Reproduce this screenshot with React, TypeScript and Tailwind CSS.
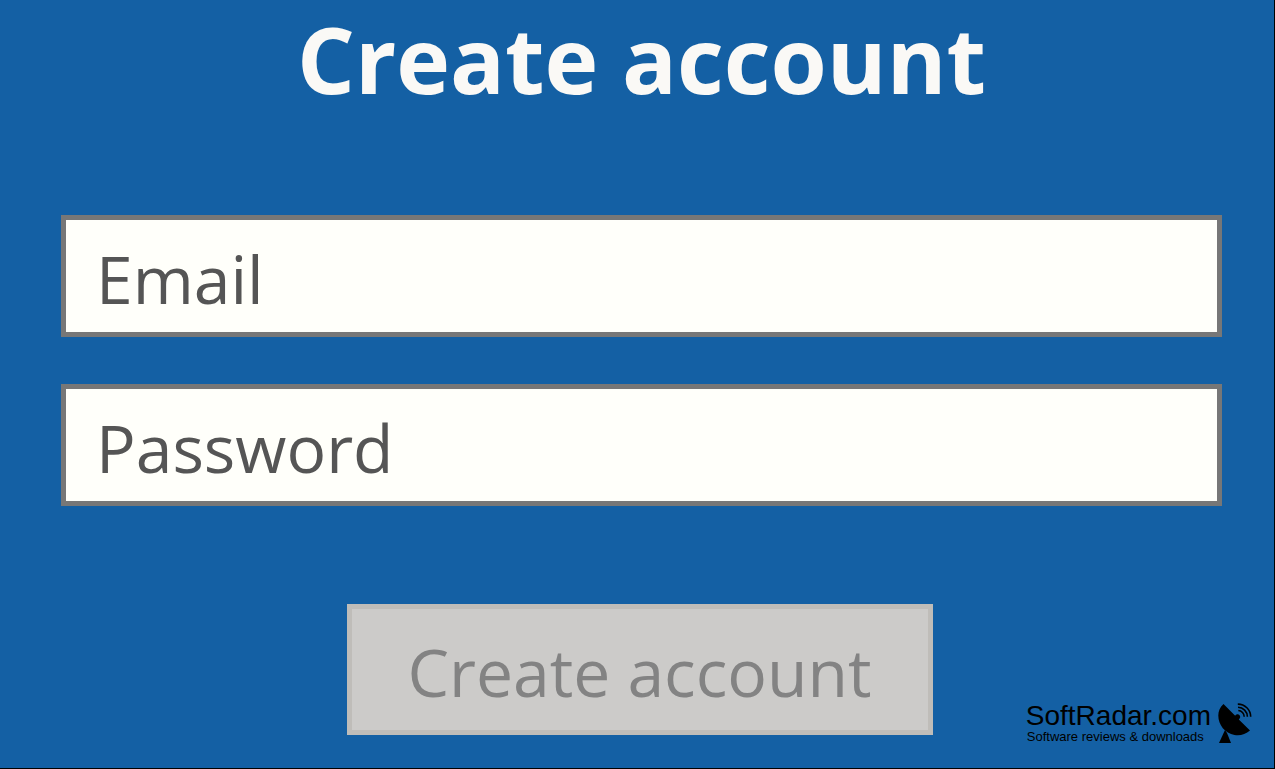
import React from "react";

const field =
  "block w-full h-[122px] rounded-none border-5 border-[#777777] bg-[#fffffa] px-[30px] pt-1 text-[66px] text-[#555555] outline-none placeholder:text-[#555555] placeholder:opacity-100";

function SatelliteDish() {
  return (
    <svg viewBox="0 0 34 41" className="h-[41px] w-[34px]" aria-hidden="true">
      <path
        d="M5.5 1 L17.2 12.8 C18 11.2 20.4 10.8 21.6 12.3 C22.8 13.8 22.1 15.6 20.8 16.4 L32 27.5 C27.5 31.5 22 33 16.5 32 C7 30.2 0.3 22 0.3 12.5 C0.3 8 2 4 5.5 1Z"
        fill="black"
      />
      <path d="M7 27 L9 30 L13 40 H1Z" fill="black" />
      <g fill="none" stroke="black" strokeWidth="1.6">
        <path d="M20.3 7.5 A6.2 6.2 0 0 1 26.2 13.8" />
        <path d="M20 4.3 A9.5 9.5 0 0 1 29.4 13.8" />
        <path d="M19.8 1.1 A12.8 12.8 0 0 1 32.7 13.8" />
      </g>
    </svg>
  );
}

export default function App() {
  return (
    <main className="relative min-h-screen border-r border-b border-black bg-[#1460a4] pr-[52px] pl-[61px] font-['Open_Sans','Noto_Sans',sans-serif]">
      <h1 className="text-center text-[91px] leading-[118px] font-bold text-[#faf9f6]">Create account</h1>
      <form className="mt-[97px] flex flex-col">
        <input type="email" aria-label="Email" placeholder="Email" className={field} />
        <input type="password" aria-label="Password" placeholder="Password" className={`${field} mt-[47px]`} />
        <div className="mt-[98px] flex justify-center pr-1">
          <button
            type="submit"
            disabled
            className="h-[131px] w-[586px] border-5 border-[#bfbdb9] bg-[#cccbc9] pt-1 text-[66px] text-[#838383]"
          >
            Create account
          </button>
        </div>
      </form>
      <a
        href="#softradar"
        className="absolute right-[22px] bottom-[24px] flex items-end gap-[7px] font-['Liberation_Sans',Arial,sans-serif] text-black"
      >
        <span className="flex flex-col">
          <span className="text-[28px] leading-[28px]">SoftRadar.com</span>
          <span className="pl-px text-[13px] leading-[14px]">Software reviews &amp; downloads</span>
        </span>
        <SatelliteDish />
      </a>
    </main>
  );
}
